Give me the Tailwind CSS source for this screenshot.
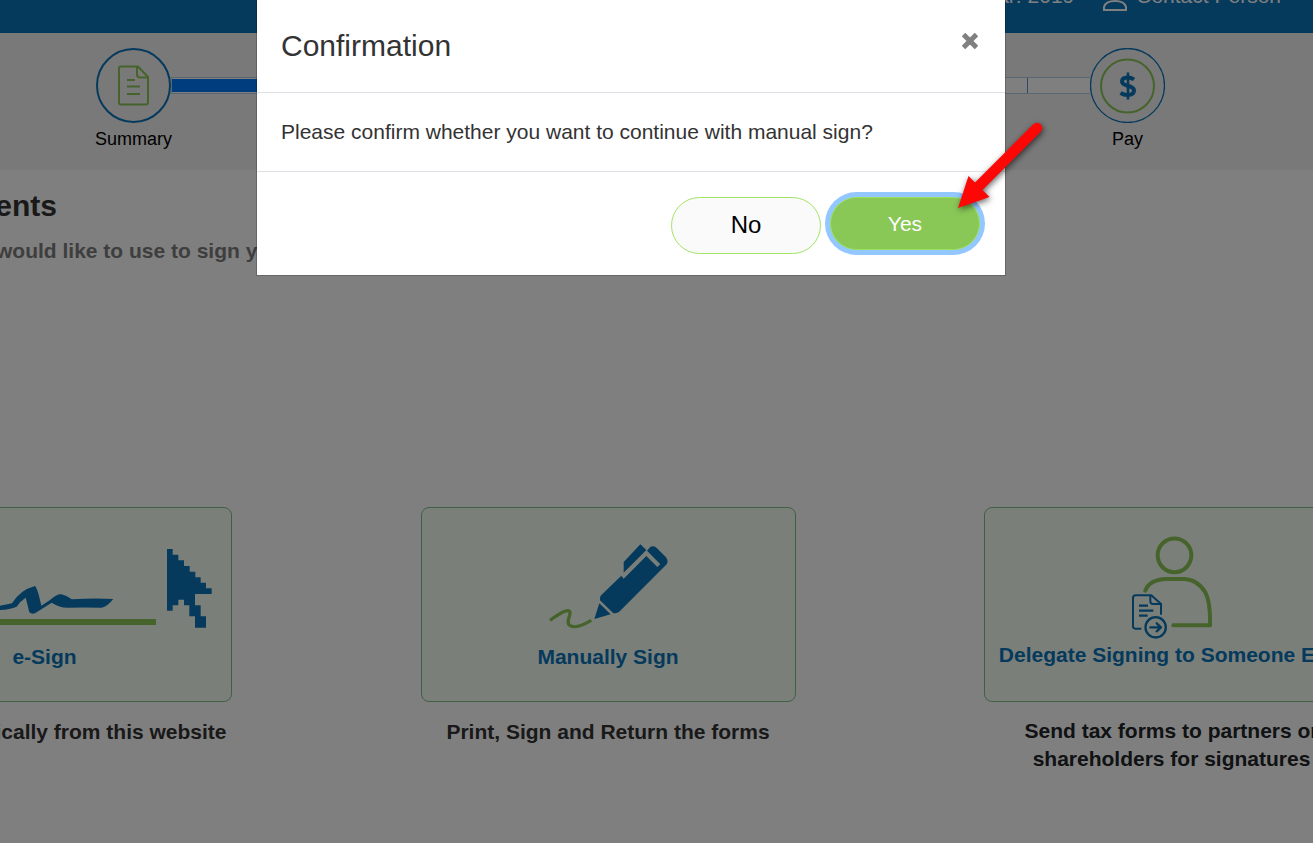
<!DOCTYPE html>
<html lang="en">

<head>
    <meta charset="UTF-8">
    <meta name="viewport" content="width=device-width, initial-scale=1.0">
    <title>Sign Documents</title>
    <script src="https://cdn.jsdelivr.net/npm/@tailwindcss/browser@4"></script>
</head>

<body class="bg-white overflow-hidden font-['Liberation_Sans',Arial,sans-serif] text-[21px] leading-7 text-[#333]">

    <!-- Top bar -->
    <header class="-mt-4 h-[49px] bg-[#0a74ba] text-white flex justify-end items-start whitespace-nowrap">
        <span class="leading-6">Tax Year: 2019</span>
        <a href="#" class="flex items-start ml-7 leading-6">
            <svg class="w-[26px] h-7 mr-2" viewBox="0 0 26 28" fill="none" stroke="#fff" stroke-width="2">
                <circle cx="13" cy="8" r="6" />
                <path d="M2 26v-3c1-4 5-6 11-6s10 2 11 6v3z" />
            </svg>
            Contact Person
        </a>
        <a href="#" class="ml-7 -mr-[22px]" aria-label="Settings">
            <svg class="w-[26px] h-6" viewBox="0 0 26 24" fill="none" stroke="#fff" stroke-width="2">
                <circle cx="13" cy="10" r="4" />
                <path d="M11 1h4l1 3 4-1 3 4-2 3 2 3-3 4-4-1-1 3h-4l-1-3-4 1-3-4 2-3-2-3 3-4 4 1z" />
            </svg>
        </a>
    </header>

    <!-- Steps -->
    <nav class="h-[137px] pt-[15px] pl-24 pr-[148px] bg-[#f2f2f2] flex items-start text-black text-lg">
        <div class="w-[75px] flex flex-col items-center">
            <svg class="w-[75px] h-[75px]" viewBox="0 0 75 75" fill="none">
                <circle cx="37.5" cy="37.5" r="36.5" stroke="#0a74ba" stroke-width="2" />
                <g stroke="#8bc756" stroke-width="2" stroke-linejoin="round">
                    <path d="M42 18.500H25q-2 0-2 2v34q0 2 2 2h25q2 0 2-2V29z" />
                    <path d="M41 18.500v8q0 3 3 3h8M31 32h8M31 38.500h13M31 46h13" />
                </g>
            </svg>
            <span class="mt-0.5">Summary</span>
        </div>
        <div class="mt-[29px] h-[17px] flex-1 flex bg-white border-y border-l border-[#b4cde4]">
            <div class="flex-1 my-px bg-[#007bff]"></div>
            <div class="w-[120px]"></div>
            <div class="w-[63px] border-l border-[#5c93c9]"></div>
        </div>
        <div class="w-[75px] flex flex-col items-center">
            <svg class="w-[75px] h-[75px]" viewBox="0 0 75 75" fill="none">
                <circle cx="37.500" cy="37.500" r="37" stroke="#0a74ba" stroke-width="1.300" />
                <circle cx="37.500" cy="38" r="26.500" stroke="#8bc756" stroke-width="2" />
                <path d="M44 31.500c-2-1.500-4-2-6.500-2-3.500 0-5.500 1.500-5.500 4 0 5.500 12 3 12 9 0 3-2.500 4.500-6.500 4.500-3 0-5-.8-7-2" stroke="#0a74ba" stroke-width="4" />
                <path d="M38 24.500v27" stroke="#0a74ba" stroke-width="2.600" />
            </svg>
            <span class="mt-0.5">Pay</span>
        </div>
    </nav>

    <main class="pt-[18px]">
        <h1 class="-ml-[143px] w-[200px] text-right text-3xl leading-9 font-bold">Documents</h1>
        <p class="-ml-1 mt-[13px] font-bold text-[#7c7c7c] whitespace-nowrap">would like to use to sign your documents</p>

        <!-- Signing options -->
        <div class="-ml-[143px] -mr-[46px] mt-[242px] flex justify-between text-center font-bold">
            <div class="w-[375px]">
                <button type="button" class="w-full h-[195px] pt-9 rounded-lg border border-[#7fc08a] bg-[#f4fff4] text-[#0a74ba] flex flex-col items-center">
                    <svg class="w-[335px] h-[86px]" viewBox="-369 130 1005 258">
                        <path fill="#0a74ba" d="M-369 325L0 315L36 308Q60 268 105 256Q112 264 118 290L124 315L150 298Q170 280 184 281Q200 284 215 296Q280 292 340 295Q322 318 305 321Q250 320 205 321Q180 322 155 306L105 338Q95 342 88 335Q82 310 77 291Q62 300 50 318Q30 326 0 328L-369 335z" />
                        <path fill="#8bc756" d="M-369 355H468V373H-369z" />
                        <path fill="#0a74ba" d="M501 145H518V162H535V179H552V196H569V213H586V230H602V246H618V263H635V280H585V314H602V347H618V381H585V347H568V314H552V297H535V314H518V330H501z" />
                    </svg>
                    <span class="mt-[13px]">e-Sign</span>
                </button>
                <p class="mt-4 whitespace-nowrap">Sign electronically from this website</p>
            </div>

            <div class="w-[375px]">
                <button type="button" class="w-full h-[195px] pt-9 rounded-lg border border-[#7fc08a] bg-[#f4fff4] text-[#0a74ba] flex flex-col items-center">
                    <svg class="w-[120px] h-[86px]" viewBox="414 128 360 256">
                        <g fill="#0a74ba">
                            <path d="M691 128L709 145L641 213V181z" />
                            <path d="M711 147L720 137Q728 130 738 137L768 167Q776 177 770 188L630 328Q624 335 610 335L570 296Q569 284 574 280L634 222L641 231L709 163L742 196L751 188z" />
                            <path d="M568 305L602 338L553 352z" />
                        </g>
                        <path d="M420 356Q476 316 480 331C481 345 470 355 476 368Q490 387 544 356" fill="none" stroke="#8bc756" stroke-width="10" />
                    </svg>
                    <span class="mt-[13px]">Manually Sign</span>
                </button>
                <p class="mt-4">Print, Sign and Return the forms</p>
            </div>

            <div class="w-[375px]">
                <button type="button" class="w-full h-[195px] pt-7 rounded-lg border border-[#7fc08a] bg-[#f4fff4] text-[#0a74ba] flex flex-col items-center whitespace-nowrap">
                    <svg class="w-20 h-[103px]" viewBox="453 107 240 307" fill="none" stroke-linecap="round" stroke-linejoin="round">
                        <g stroke="#8bc756" stroke-width="12">
                            <circle cx="580.500" cy="164" r="50.500" />
                            <path d="M493 270Q505 237 555 235H610Q650 237 673 275Q689 305 687 374H577" />
                        </g>
                        <g stroke="#0a74ba" stroke-width="6">
                            <path stroke-linecap="butt" d="M481 384H463Q456 384 456 377V292Q456 284 464 284H511L540 310V342" />
                            <path d="M508 286V302Q508 310 516 310H540" />
                            <path stroke-linecap="butt" stroke-width="7" d="M474 315H501M474 330H517M474 345H500" />
                            <circle cx="524" cy="380" r="30.500" stroke-width="7" />
                            <path stroke-width="7" d="M508 380H540M527 368L540 380L527 392" />
                        </g>
                    </svg>
                    <span class="mt-0.5">Delegate Signing to Someone Else</span>
                </button>
                <p class="mt-[15px] text-[#212529]">Send tax forms to partners or<br>shareholders for signatures</p>
            </div>
        </div>
    </main>

    <!-- Confirmation modal -->
    <div class="fixed inset-0 bg-black/50 flex justify-center items-start pr-[51px]">
        <div role="dialog" aria-labelledby="modalTitle" class="relative w-[750px] -mt-px bg-white bg-clip-padding border border-black/20">
            <div class="h-[93px] px-6 flex justify-between border-b border-[#dee2e6]">
                <h2 id="modalTitle" class="pt-7 text-3xl leading-9">Confirmation</h2>
                <button type="button" aria-label="Close" class="mt-[33px] mr-[3px] w-4 h-4">
                    <svg class="w-4 h-4" viewBox="0 0 16 16" stroke="#808080" stroke-width="5">
                        <path d="M1.500 1.500L14.500 14.500M14.500 1.500L1.500 14.500" />
                    </svg>
                </button>
            </div>
            <p class="h-[79px] px-6 pt-[25px] border-b border-[#dee2e6]">Please confirm whether you want to continue with manual sign?</p>
            <div class="pr-[25px] pt-[25px] pb-[21px] flex justify-end items-start gap-[9px]">
                <button type="button" class="w-[150px] h-[57px] pb-0.5 rounded-full border border-[#a3e467] bg-[#fafafa] text-black text-2xl">No</button>
                <button type="button" class="w-[150px] h-[53px] rounded-full border border-[#9be25c] bg-[#89c757] text-white text-[21px] ring-5 ring-[#93c7ff]">Yes</button>
            </div>

            <!-- Pointer to the Yes button -->
            <svg class="absolute right-[-43px] top-[116px] w-[96px] h-[98px] drop-shadow-[1px_2px_3px_rgba(0,0,0,0.6)]" viewBox="952 116 96 98">
                <path d="M1037 128L976 189" stroke="#fd0606" stroke-width="10.500" stroke-linecap="round" />
                <path d="M958 208L968.500 176L989.500 197z" fill="#fd0606" />
            </svg>
        </div>
    </div>

</body>

</html>
